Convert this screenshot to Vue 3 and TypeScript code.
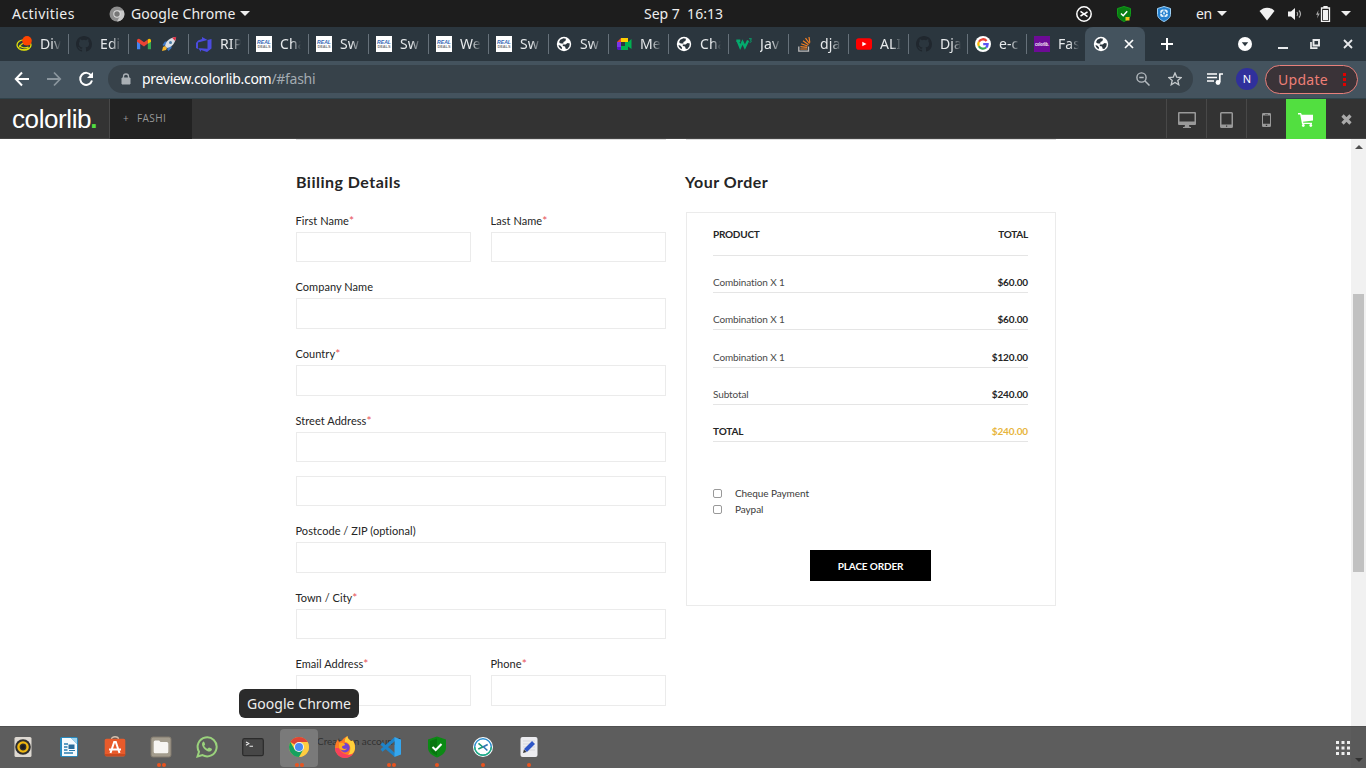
<script setup lang="ts">
interface Tab { icon: string; title: string; kind?: string }
interface Field { label: string; required?: boolean; lines?: number }
interface Line { name: string; price: string; kind?: string }
interface App { icon: string; dots: number; active?: boolean }

const tabs: Tab[] = [
  { icon: 'diver', title: 'Div' },
  { icon: 'github', title: 'Edi' },
  { icon: 'gmail', title: '🚀', kind: 'rocket' },
  { icon: 'azure', title: 'RIP' },
  { icon: 'deals', title: 'Cha' },
  { icon: 'deals', title: 'Sw' },
  { icon: 'deals', title: 'Sw' },
  { icon: 'deals', title: 'We' },
  { icon: 'deals', title: 'Sw' },
  { icon: 'globe', title: 'Sw' },
  { icon: 'meet', title: 'Me' },
  { icon: 'globe', title: 'Cha' },
  { icon: 'w3', title: 'Jav' },
  { icon: 'stack', title: 'dja' },
  { icon: 'youtube', title: 'ALI' },
  { icon: 'github', title: 'Dja' },
  { icon: 'google', title: 'e-c' },
  { icon: 'purple', title: 'Fas' },
]

const rows: Field[][] = [
  [{ label: 'First Name', required: true }, { label: 'Last Name', required: true }],
  [{ label: 'Company Name' }],
  [{ label: 'Country', required: true }],
  [{ label: 'Street Address', required: true, lines: 2 }],
  [{ label: 'Postcode / ZIP (optional)' }],
  [{ label: 'Town / City', required: true }],
  [{ label: 'Email Address', required: true }, { label: 'Phone', required: true }],
]

const lines: Line[] = [
  { name: 'Combination X 1', price: '$60.00' },
  { name: 'Combination X 1', price: '$60.00' },
  { name: 'Combination X 1', price: '$120.00' },
  { name: 'Subtotal', price: '$240.00' },
  { name: 'TOTAL', price: '$240.00', kind: 'sum' },
]

const payments: string[] = ['Cheque Payment', 'Paypal']

const apps: App[] = [
  { icon: 'rhythm', dots: 0 },
  { icon: 'writer', dots: 0 },
  { icon: 'store', dots: 0 },
  { icon: 'files', dots: 2 },
  { icon: 'whatsapp', dots: 0 },
  { icon: 'terminal', dots: 0 },
  { icon: 'chrome', dots: 2, active: true },
  { icon: 'firefox', dots: 0 },
  { icon: 'code', dots: 2 },
  { icon: 'shield', dots: 1 },
  { icon: 'desk', dots: 1 },
  { icon: 'editor', dots: 1 },
]
</script>

<template>
  <div class="screen">
    <svg class="defs" aria-hidden="true">
      <symbol id="diver" viewBox="0 0 16 16">
        <ellipse cx="8" cy="9" rx="7" ry="5.2" fill="none" stroke="#e0e00a" stroke-width="1.300" />
        <path d="M2.500 12c2-4 5-5 7-5M3.500 9c1 3 6 3.500 9 2M4 13c3 1 7 1 9-1" fill="none" stroke="#e0e00a" stroke-width="1.100" />
        <circle cx="11" cy="4.800" r="4.800" fill="#ff4500" />
      </symbol>
      <symbol id="github" viewBox="0 0 16 16">
        <path fill="#20272e" d="M8 0C3.580 0 0 3.580 0 8c0 3.540 2.290 6.530 5.470 7.590.4.070.55-.17.55-.38v-1.490c-2.010.37-2.530-.49-2.690-.94-.09-.23-.48-.94-.82-1.130-.28-.15-.68-.52-.01-.53.63-.01 1.080.58 1.230.82.72 1.210 1.870.87 2.330.66.07-.52.28-.87.51-1.070-1.780-.2-3.640-.89-3.640-3.950 0-.87.31-1.590.82-2.150-.08-.2-.36-1.020.08-2.120 0 0 .67-.21 2.200.82a7.600 7.600 0 0 1 4 0c1.530-1.040 2.200-.82 2.200-.82.44 1.100.16 1.920.08 2.120.51.56.82 1.270.82 2.150 0 3.070-1.870 3.750-3.650 3.950.29.25.54.73.54 1.480v2.200c0 .21.15.46.55.38A8 8 0 0 0 16 8c0-4.420-3.580-8-8-8z" />
      </symbol>
      <symbol id="gmail" viewBox="0 0 16 16">
        <path fill="#4285f4" d="M1 5v8.300h3.200V7z" /><path fill="#34a853" d="M15 5v8.300h-3.200V7z" />
        <path fill="#ea4335" d="M1 5C1 2.800 2.800 2.300 4.200 3.400L8 6.300l3.800-2.900v4.100L8 10.400 1 5.800z" />
        <path fill="#fbbc04" d="M11.800 3.400c1.400-1.100 3.200-.6 3.200 1.600v.8l-3.200 2z" />
      </symbol>
      <symbol id="azure" viewBox="0 0 16 16">
        <path fill="#4b4be0" d="M15.500 3v9.500L11 16l-6-2v2L2 12l9.500.8V4zM11.500 4 6 1v2L2 4.500 0 7v5l2 1V6.500z" />
      </symbol>
      <symbol id="globe" viewBox="0 0 16 16">
        <circle cx="8" cy="8" r="7.200" fill="#fff" />
        <path fill="#2b363e" d="M7.500 2.300 10 2.800l-.6 2.200-2 1v1.500H4.800L3 6.200l1.200-2.400zM6.800 8.500h2.700l2-1.500 2.300.5-.5 3-2 2.500-1.600-.2-.7-2.300-2.200-.5zM2.500 9l2 .8 1.500 1.700-.3 1.700C4 12.500 2.800 11 2.500 9z" />
      </symbol>
      <symbol id="meet" viewBox="0 0 16 16">
        <path fill="#ffcf00" d="M5 2h7v4H5z" /><path fill="#ea4335" d="M1 6l4-4v4z" />
        <path fill="#7b35e8" d="M1 6h4v5H1z" /><path fill="#5a13c8" d="M1 11h4v3H2l-1-1z" />
        <path fill="#2b363e" d="M5 6h5v4H5z" />
        <path fill="#00b050" d="M5 10h4V6h3l3.500-3v10L12 10.500V14H5z" />
      </symbol>
      <symbol id="w3" viewBox="0 0 16 16">
        <path d="M1.500 4.500 4.200 11 6.500 6l2.400 5 3.200-6.500M.3 4.800h4" fill="none" stroke="#04aa6d" stroke-width="2.400" />
        <path d="M13 2.700h2.500L14.400 4.300c1.400 0 1.400 2-.8 2" fill="none" stroke="#04aa6d" stroke-width=".9" />
      </symbol>
      <symbol id="stack" viewBox="0 0 16 16">
        <path d="M2.800 10.500v4.700h9.700v-4.700" fill="none" stroke="#bcbbbb" stroke-width="1.300" />
        <path d="M4.300 13h6.800M4.400 10.600l6.700.8M5.200 7.800l6.400 2.200M7 4.800l5.500 4M9.500 2.200l4 5.300M13 1l.8 5.500" stroke="#f48024" stroke-width="1.200" />
      </symbol>
      <symbol id="youtube" viewBox="0 0 16 16">
        <rect y="2.300" width="16" height="11.400" rx="2.800" fill="#f00" /><path d="m6.300 5.700 4.200 2.300-4.200 2.300z" fill="#fff" />
      </symbol>
      <symbol id="google" viewBox="0 0 16 16">
        <circle cx="8" cy="8" r="8" fill="#fff" />
        <g fill="none" stroke-width="2.300"><path d="M11.600 4.900A4.700 4.700 0 0 0 3.900 5.700" stroke="#ea4335" /><path d="M3.900 5.700a4.700 4.700 0 0 0 0 4.600" stroke="#fbbc05" /><path d="M3.900 10.300a4.700 4.700 0 0 0 7.200 1.200" stroke="#34a853" /><path d="M8.200 8.200h4.400c0 1.500-.6 2.500-1.500 3.300" stroke="#5a55f5" /></g>
      </symbol>

      <symbol id="rhythm" viewBox="0 0 22 22">
        <rect x="2.500" y="1" width="17" height="20" rx="1.500" fill="#ded9d2" /><circle cx="11" cy="11" r="7.800" fill="#2e2e2e" />
        <circle cx="11" cy="11" r="4.600" fill="none" stroke="#efb710" stroke-width="2.400" /><circle cx="11" cy="11" r="2" fill="#1d1d1d" />
      </symbol>
      <symbol id="writer" viewBox="0 0 22 22">
        <rect x="2" y="1" width="18" height="20" rx="2" fill="#2889bd" />
        <path d="M4 2h9l6 6v12H4z" fill="#f4fafd" /><path d="M13 2h6v6z" fill="#9fd3ee" />
        <path d="M6 8h4M6 11h3.500M6 14h3.500M6 17h9" stroke="#2a7db0" stroke-width="1.300" /><rect x="10.500" y="8.500" width="6" height="4.500" fill="#2a6d9c" /><path d="M11 14.500h6" stroke="#2a7db0" />
      </symbol>
      <symbol id="store" viewBox="0 0 22 22">
        <path d="M7.500 4V3c0-3 7-3 7 0v1" fill="none" stroke="#d6c0ad" stroke-width="1.300" />
        <rect x=".7" y="2.800" width="20.600" height="17.700" rx="1.800" fill="#e95b2b" /><path d="M.7 19h20.600" stroke="#a93a16" />
        <path d="M6.500 17 10.200 6h1.600l3.700 11M5 13.500h12" fill="none" stroke="#fff" stroke-width="2" />
      </symbol>
      <symbol id="files" viewBox="0 0 22 22">
        <rect x="1" y="1" width="20" height="20" rx="2" fill="#a39c8d" stroke="#827b6e" /><path d="M3.700 6q0-1.500 1.500-1.500h4L10.500 6h6.300q1.500 0 1.500 1.500v8.300q0 1.500-1.500 1.500H5.200q-1.500 0-1.500-1.500z" fill="#f7f5f2" />
      </symbol>
      <symbol id="whatsapp" viewBox="0 0 22 22">
        <path d="M1.500 20.500 3 15.700a9.500 9.500 0 1 1 3.500 3.400z" fill="none" stroke="#9ad27c" stroke-width="2" />
        <path d="M7.300 5.500c-2.800 2.500-.5 6 2 8.300 2.500 2.200 5 2.500 6.500.2.500-.8.300-1.200-2.700-2.400-.8 0-1 1.400-1.600 1.200-1.800-.6-3.200-2.300-3.300-3 .1-.6 1-1 .9-1.600-.5-1.300-.8-2.700-1.800-2.700z" fill="#9ad27c" />
      </symbol>
      <symbol id="terminal" viewBox="0 0 22 22">
        <rect x=".7" y="2.700" width="20.600" height="17" rx="1.800" fill="#474747" stroke="#2b2b2b" stroke-width="1.200" />
        <path d="m4 6 2.800 1.600L4 9.200M7.500 10.300h3.500" fill="none" stroke="#eee" stroke-width="1.100" />
      </symbol>
      <symbol id="chrome" viewBox="0 0 22 22">
        <circle cx="11" cy="11" r="10" fill="#ffcd40" /><path d="M11 11 2.340 6A10 10 0 0 1 19.660 6z" fill="#dd4436" />
        <path d="M11 6h8.660A10 10 0 0 1 11 21l4.300-7.500z" fill="#ffcd40" /><path d="M2.340 6A10 10 0 0 0 11 21l4.300-7.500H6.700z" fill="#16a15f" />
        <circle cx="11" cy="11" r="5" fill="#f3f3f3" /><circle cx="11" cy="11" r="4" fill="#4a8af4" />
      </symbol>
      <symbol id="firefox" viewBox="0 0 22 22">
        <path d="M1 12C1 8 2 6 4 3.500L5 6l3-1.500C9 2 12 1 13.500 0c0 3 2 3.500 3.500 5l1.500-.5C20.500 6.500 21.300 9 21 12a10 10 0 0 1-20 0z" fill="#ff7b24" />
        <path d="M13.500 0C11 2 10.500 4 11 6c3 0 5.500 3 5.300 6.500 0 3-1 5-2.300 6.500 5-.3 7-4 7-7 0-3.500-1-6-2.500-7.500L17 5c-1.500-1.500-3.500-2-3.500-5z" fill="#ffd03a" />
        <path d="M1 12c0 5 4.500 10 10 10 3 0 6-1.500 8-4-5 2-12 0-14-6z" fill="#f8405c" /><circle cx="11" cy="11.800" r="4.700" fill="#7242d2" /><path d="M5 7c3-.5 6 0 6 1.500 0 1.200-3 1-3 2.500s2 2.500 5 1.500c-2 3-7 2-8-1z" fill="#ffa91e" />
      </symbol>
      <symbol id="code" viewBox="0 0 22 22">
        <path d="m1.500 14.500 14-12M1.500 7.500l14 12" stroke="#1e83c8" stroke-width="3" /><path d="m14.500 1 6.500 2.500v15L14.500 21z" fill="#35a6ed" />
      </symbol>
      <symbol id="shield" viewBox="0 0 22 22">
        <path d="m11 .5 9 3v8c0 5-4 8-9 10-5-2-9-5-9-10v-8z" fill="#0b8a14" /><path d="M11 2.500 4 5v6.500c0 4 3 6.300 7 8z" fill="#08760f" /><path d="m6.500 11 3.200 3 5.800-6" fill="none" stroke="#fff" stroke-width="2" />
      </symbol>
      <symbol id="desk" viewBox="0 0 22 22">
        <circle cx="11" cy="11" r="10" fill="#fff" /><circle cx="11" cy="11" r="8.300" fill="none" stroke="#2f8fd0" stroke-width="1.400" /><path d="M2.700 11a8.300 8.300 0 0 0 16.600 0" fill="none" stroke="#21b07b" stroke-width="1.400" />
        <path d="m6.500 7.300 4.300 3.700-4.500 2" fill="none" stroke="#1b9c78" stroke-width="1.600" /><path d="m15.700 8.500-4.300 2.300 4 3.700" fill="none" stroke="#3176b5" stroke-width="1.600" />
      </symbol>
      <symbol id="editor" viewBox="0 0 22 22">
        <rect x="2.500" y="1" width="17" height="20" rx="2" fill="#ececf0" /><path d="M5 5h12M5 8h12M5 11h12M5 14h12" stroke="#d5d5dc" />
        <path d="m7.500 14.500 8-8" stroke="#2d55c7" stroke-width="4" /><path d="m5 17 1-3.500L8.500 16z" fill="#333" />
      </symbol>
    </svg>

    <header class="panel">
      <span class="activities">Activities</span>
      <span class="app-menu">
        <svg class="i16" viewBox="0 0 16 16"><circle cx="8" cy="8" r="7.500" fill="#8d8d8d" /><path d="M8 4.500h6.500A7.500 7.500 0 0 1 8 15.500l3-5.500z" fill="#c9c9c9" /><circle cx="8" cy="8" r="3.700" fill="#ddd" /><circle cx="8" cy="8" r="2.700" fill="#777" /></svg>
        <span class="app-name">Google Chrome</span><i class="caret" />
      </span>
      <span class="clock">Sep 7&nbsp; 16:13</span>
      <div class="tray">
        <svg class="t-desk" viewBox="0 0 16 16"><circle cx="8" cy="8" r="7.200" fill="none" stroke="#fff" stroke-width="1.500" /><path d="m4.500 5.300 3.500 2.700-3.500 2M11.500 6 8 8l3.500 2.700" fill="none" stroke="#fff" stroke-width="1.500" /></svg>
        <svg class="t-shield" viewBox="0 0 14 16"><path d="m7 .5 6.500 2v6c0 3-3 5.500-6.500 7C3.500 14 .5 11.500.5 8.500v-6z" fill="#0a7d12" stroke="#119b1a" /><path d="m4 7.500 2.200 2.200 4-4.500" fill="none" stroke="#fff" stroke-width="1.500" /><path d="M8.500 11h4v3.500h-4z" fill="#f0c419" /></svg>
        <svg class="t-vpn" viewBox="0 0 14 16"><path d="m7 .5 6.500 2v6c0 3-3 5.500-6.500 7C3.500 14 .5 11.500.5 8.500v-6z" fill="#2581cf" stroke="#9fd0f5" /><rect x="3.200" y="3.500" width="7.600" height="7.600" rx="2.500" fill="#e3f2fc" /><path d="M5.500 5.800h3v3h-3z" fill="#bfe0f8" stroke="#2581cf" /><path d="M7 3.500v2M7 9v2M3.200 7.300h2M9 7.300h2" stroke="#2581cf" /></svg>
        <span class="lang">en</span><i class="caret" />
        <svg class="t-wifi" viewBox="0 0 16 14"><path d="M8 13.500.5 4C5-.5 11-.5 15.500 4z" fill="#f2f2f2" /></svg>
        <svg class="t-vol" viewBox="0 0 16 14"><path d="M1 4.500h3L8 1v12L4 9.500H1z" fill="#f2f2f2" /><path d="M10 5q1.500 2 0 4M12 3.500q3 3.500 0 7" fill="none" stroke="#aaa" stroke-width="1.200" /></svg>
        <svg class="t-bat" viewBox="0 0 16 16"><path d="M3.500 4 1 8.800h1.800L2 12.500l2.800-5H3z" fill="#aaa" /><path d="M9 0h3v1.500H9zM6.500 2h8v13.300h-8z" fill="none" stroke="#f2f2f2" stroke-width="1.300" /><path d="M8 4h5v10H8z" fill="#f2f2f2" /></svg>
        <i class="caret last" />
      </div>
    </header>

    <nav class="tabs">
      <div v-for="(t, n) in tabs" :key="n" class="tab" :class="{ narrow: n > 14 }">
        <svg v-if="t.icon === 'deals'" class="fav" viewBox="0 0 16 16">
          <rect width="16" height="16" fill="#fff" />
          <text x="1" y="7.600" font-size="4.900" font-weight="700" font-style="italic" textLength="14" lengthAdjust="spacingAndGlyphs" fill="#3568b5">REAL</text>
          <text x="1.500" y="12.300" font-size="4.200" font-weight="700" textLength="13" lengthAdjust="spacingAndGlyphs" fill="#77767e">DEALS</text>
        </svg>
        <svg v-else-if="t.icon === 'purple'" class="fav" viewBox="0 0 16 16">
          <rect width="16" height="16" fill="#6d0b96" />
          <text x="1" y="9.700" font-size="4.500" font-weight="700" textLength="14" lengthAdjust="spacingAndGlyphs" fill="#fff">colorlib.</text>
        </svg>
        <svg v-else class="fav"><use :href="'#' + t.icon" /></svg>
        <svg v-if="t.kind" class="rocket" viewBox="0 0 16 16"><path d="m1 15 1-4 2-1 2 2-1 2z" fill="#f5b328" /><path d="M4 5.500h4L3 10 1.500 9zM10.500 8v4l-3 3L6 13z" fill="#3d79c9" /><path d="M4 10C5 5 9 1.500 15 1c-.5 6-4 10-9 11z" fill="#d9dee4" /><path d="M11 1.800 15.300.7 14.200 5z" fill="#dd2e44" /><circle cx="9.500" cy="6.500" r="1.500" fill="#4a7ca8" /></svg>
        <span v-else class="title">{{ t.title }}</span>
      </div>
      <div class="tab-active">
        <svg class="fav"><use href="#globe" /></svg>
        <svg class="x" viewBox="0 0 10 10"><path d="m1 1 8 8M9 1 1 9" stroke="#fff" stroke-width="1.700" /></svg>
      </div>
      <svg class="plus" viewBox="0 0 12 12"><path d="M6 0v12M0 6h12" stroke="#fff" stroke-width="2" /></svg>
      <div class="win">
        <svg class="w-drop" viewBox="0 0 14 14"><circle cx="7" cy="7" r="7" fill="#fff" /><path d="M3.800 5.300h6.400L7 9.200z" fill="#2b363e" /></svg>
        <svg class="w-min" viewBox="0 0 10 2"><path d="M0 0h10v2H0z" fill="#e8eaec" /></svg>
        <svg class="w-max" viewBox="0 0 10 10"><path d="M3.500 1H9v5.500H3.500z" fill="none" stroke="#e8eaec" stroke-width="1.900" /><path d="M1 3v6.200h6.500" fill="none" stroke="#e8eaec" stroke-width="1.700" /></svg>
        <svg class="w-close" viewBox="0 0 10 10"><path d="m1 1 8 8M9 1 1 9" stroke="#e8eaec" stroke-width="1.800" /></svg>
      </div>
    </nav>

    <div class="toolbar">
      <svg class="nav" viewBox="0 0 16 16"><path d="M15 8H2M8 1.500 1.800 8 8 14.500" fill="none" stroke="#fff" stroke-width="2" /></svg>
      <svg class="nav" viewBox="0 0 16 16"><path d="M1 8h13M8 1.500 14.200 8 8 14.500" fill="none" stroke="#8b969e" stroke-width="1.800" /></svg>
      <svg class="nav" viewBox="0 0 16 16"><path d="M13.200 4.500A6 6 0 1 0 14 9.500" fill="none" stroke="#fff" stroke-width="2" /><path d="M15 1v6H9z" fill="#fff" /></svg>
      <div class="omnibox">
        <svg class="lock" viewBox="0 0 10 12"><path d="M1 5h8v6H1z" fill="#aab0b5" stroke="#aab0b5" stroke-linejoin="round" /><path d="M2.500 5V3.500a2.500 2.500 0 0 1 5 0V5" fill="none" stroke="#aab0b5" stroke-width="1.300" /></svg>
        <span class="url">preview.colorlib.com<em>/#fashi</em></span>
        <svg class="mag" viewBox="0 0 14 14"><circle cx="5.500" cy="5.500" r="4.600" fill="none" stroke="#b5bbc0" stroke-width="1.400" /><path d="m9 9 4.500 4.500M3.300 5.500h4.400" stroke="#b5bbc0" stroke-width="1.500" /></svg>
        <svg class="star" viewBox="0 0 14 14"><path d="m7 1 1.700 4.100 4.500.4-3.400 2.900 1 4.400L7 10.500l-3.800 2.300 1-4.400L.8 5.500l4.500-.4z" fill="none" stroke="#c5cacd" stroke-width="1.300" /></svg>
      </div>
      <svg class="queue" viewBox="0 0 16 14"><path d="M0 2h10M0 5.500h10M0 9h7M12.800 1.500V10M12.500 2h3.500" stroke="#fff" stroke-width="1.700" /><circle cx="11" cy="10.500" r="2.400" fill="#fff" /></svg>
      <span class="avatar">N</span>
      <span class="update"><span>Update</span><svg viewBox="0 0 3 13"><path d="M0 0h3v3H0zM0 5h3v3H0zM0 10h3v3H0z" fill="#e00000" /></svg></span>
    </div>

    <div class="preview-bar">
      <div class="logo"><span>colorlib</span><b>.</b></div>
      <div class="theme"><span class="sign">+</span>FASHI</div>
      <div class="devices">
        <div class="dev"><svg class="d1" viewBox="0 0 18 16"><path fill-rule="evenodd" fill="#999" d="M1 0h16q1 0 1 1v11q0 1-1 1h-6l.5 2H13v1H5v-1h1.500L7 13H1q-1 0-1-1V1q0-1 1-1zm.5 1.500v8h15v-8z" /></svg></div>
        <div class="dev"><svg class="d2" viewBox="0 0 13 16"><path fill-rule="evenodd" fill="#999" d="M1.500 0h10Q13 0 13 1.500v13q0 1.500-1.500 1.500h-10Q0 16 0 14.500v-13Q0 0 1.500 0zm0 1.500v11h10v-11zM6 13.500v1.300h1.200v-1.300z" /></svg></div>
        <div class="dev"><svg class="d3" viewBox="0 0 9 14"><path fill-rule="evenodd" fill="#999" d="M1.300 0h6.400Q9 0 9 1.300v11.400Q9 14 7.700 14H1.300Q0 14 0 12.700V1.300Q0 0 1.300 0zM1 2.500v8.300h7V2.500zM3.800 11.800V13h1.400v-1.200zM3 1v.6h3V1z" /></svg></div>
        <div class="dev buy"><svg class="d4" viewBox="0 0 16 14"><path d="M0 0h3l.8 1.700H15V7.500L5 8.700l.3 1H14V11H4L2.200 1.400H0z" fill="#fff" /><circle cx="5.300" cy="12.500" r="1.400" fill="#fff" /><circle cx="12.800" cy="12.500" r="1.400" fill="#fff" /></svg></div>
        <div class="dev end"><svg class="d5" viewBox="0 0 11 11"><path d="m1.500 1.500 8 8M9.500 1.500l-8 8" stroke="#aaa" stroke-width="3.200" /></svg></div>
      </div>
    </div>

    <main class="page">
      <section class="billing">
        <h4>Biiling Details</h4>
        <div v-for="(r, n) in rows" :key="n" class="row">
          <div v-for="f in r" :key="f.label" class="field">
            <label>{{ f.label }}<span v-if="f.required" class="req">*</span></label>
            <input v-for="k in f.lines ?? 1" :key="k" type="text">
          </div>
        </div>
        <div class="create"><span>Create an account?</span></div>
      </section>
      <section class="order">
        <h4>Your Order</h4>
        <div class="card">
          <div class="head"><span>PRODUCT</span><span>TOTAL</span></div>
          <div v-for="(l, n) in lines" :key="n" class="line" :class="l.kind"><span>{{ l.name }}</span><b>{{ l.price }}</b></div>
          <div class="pay">
            <div v-for="p in payments" :key="p" class="opt"><i class="box" /><span>{{ p }}</span></div>
          </div>
          <button type="button">PLACE ORDER</button>
        </div>
      </section>
      <div class="scroll"><i class="up" /><div class="thumb" /><i class="down" /></div>
    </main>

    <div class="tooltip">Google Chrome</div>
    <footer class="dock">
      <div v-for="a in apps" :key="a.icon" class="app" :class="{ on: a.active }">
        <svg><use :href="'#' + a.icon" /></svg>
        <span class="dots"><i v-for="d in a.dots" :key="d" /></span>
      </div>
      <svg class="grid" viewBox="0 0 14 14"><path d="M0 0h3v3H0zM5.500 0h3v3h-3zM11 0h3v3h-3zM0 5.500h3v3H0zM5.500 5.500h3v3h-3zM11 5.500h3v3h-3zM0 11h3v3H0zM5.500 11h3v3h-3zM11 11h3v3h-3z" fill="#eee" /></svg>
    </footer>
  </div>
</template>

<style>
body { margin: 0; overflow: hidden; }
</style>

<style scoped>
.screen { position: relative; width: 1366px; height: 768px; overflow: hidden; background: #fff; font-family: "Noto Sans", "Open Sans", sans-serif; display: flex; flex-direction: column; }
.screen * { box-sizing: border-box; }
.defs { position: absolute; width: 0; height: 0; }
svg { display: block; flex: none; }
i { flex: none; }
.panel { height: 27px; flex: none; background: #1d1d1d; color: #eee; display: flex; align-items: center; padding-left: 12px; font-size: 14px; white-space: nowrap; }
.activities { width: 97px; letter-spacing: .45px; }
.app-menu { display: flex; align-items: center; width: 535px; }
.i16 { width: 16px; height: 16px; margin-right: 6px; }
.app-name { letter-spacing: .08px; }
.caret { border: 5px solid transparent; border-top-color: #eee; border-bottom: 0; margin-left: 5px; }
.clock { width: 432px; letter-spacing: 0; }
.tray { display: flex; align-items: center; }
.t-desk { width: 16px; height: 16px; }
.t-shield { width: 14px; height: 16px; margin-left: 25px; }
.t-vpn { width: 14px; height: 16px; margin-left: 26px; }
.lang { margin-left: 25px; letter-spacing: -.3px; }
.tray .caret { margin-left: 5px; }
.t-wifi { width: 16px; height: 14px; margin-left: 32px; }
.t-vol { width: 16px; height: 14px; margin-left: 12px; }
.t-bat { width: 16px; height: 16px; margin-left: 12px; }
.tray .last { margin-left: 10px; }

.tabs { height: 34px; flex: none; background: #2b363e; display: flex; align-items: center; padding-left: 9px; }
.tab { width: 60px; height: 20px; border-right: 1px solid #66717a; display: flex; align-items: center; padding-left: 7px; flex: none; }
.tab.narrow { width: 59px; }
.tab:nth-child(18) { border-right: 0; width: 58px; }
.fav { width: 16px; height: 16px; margin-right: 8px; font-family: "Liberation Sans", Arial, sans-serif; }
.rocket { width: 16px; height: 16px; margin-left: 1px; }
.title { width: 21px; overflow: hidden; white-space: nowrap; color: #e6e9eb; font-size: 14px; line-height: 20px; letter-spacing: .1px; mask-image: linear-gradient(90deg, #000 55%, transparent); }
.tab-active { width: 60px; height: 34px; background: #44535e; border-radius: 8px 8px 0 0; display: flex; align-items: center; padding-left: 8px; flex: none; }
.x { width: 10px; height: 10px; margin-left: 7px; }
.plus { width: 12px; height: 12px; margin-left: 16px; }
.win { margin-left: auto; display: flex; align-items: center; padding-right: 13px; }
.w-drop { width: 14px; height: 14px; }
.w-min { width: 10px; height: 2px; margin: 8px 22px 0 26px; }
.w-max { width: 10px; height: 10px; margin-right: 23px; }
.w-close { width: 10px; height: 10px; }

.toolbar { height: 38px; flex: none; background: #44535e; border-bottom: 1px solid #30424a; display: flex; align-items: center; padding: 0 8px 1px 14px; }
.nav { width: 16px; height: 16px; margin-right: 16px; }
.nav + .nav + .nav { margin-right: 14px; }
.omnibox { width: 1085px; height: 28px; border-radius: 14px; background: #37424a; display: flex; align-items: center; padding: 0 11px 0 13px; }
.lock { width: 10px; height: 12px; margin-right: 11px; }
.url { font-size: 14px; line-height: 20px; color: #fff; letter-spacing: -.29px; white-space: nowrap; }
.url em { font-style: normal; color: #a3abb1; }
.mag { width: 14px; height: 14px; margin-left: auto; }
.star { width: 14px; height: 14px; margin-left: 18px; }
.queue { width: 16px; height: 14px; margin-left: 14px; }
.avatar { width: 22px; height: 22px; border-radius: 50%; background: #30309c; color: #fff; font-size: 11px; line-height: 22px; text-align: center; margin-left: 13px; }
.update { width: 93px; height: 29px; margin-left: auto; border: 1px solid #e8807b; border-radius: 15px; background: #3a3338; color: #ee7f77; font-size: 14px; letter-spacing: .3px; display: flex; align-items: center; justify-content: space-between; padding: 0 11px 0 12px; }
.update svg { width: 3px; height: 13px; }

.preview-bar { height: 40px; flex: none; background: #333; border-bottom: 1px solid #444; display: flex; }
.logo { width: 110px; border-right: 1px solid #484848; padding-left: 12px; display: flex; color: #fff; font: 26px/41px "Liberation Sans", Arial, sans-serif; letter-spacing: -.4px; }
.logo b { color: #52df40; margin-left: -1px; }
.theme { width: 82px; height: 40px; background: #222; color: #999; font: 10px/39px "Open Sans", sans-serif; padding-left: 13px; letter-spacing: .4px; }
.sign { display: inline-block; width: 14px; color: #999; }
.devices { margin-left: auto; display: flex; height: 40px; }
.dev { width: 40px; height: 39px; border-left: 1px solid #484848; display: flex; align-items: center; justify-content: center; padding-top: 2px; }
.dev.buy { background: #52df40; border: 0; height: 40px; }
.dev.end { border: 0; }
.d1 { width: 18px; height: 16px; } .d2 { width: 13px; height: 16px; } .d3 { width: 9px; height: 14px; } .d4 { width: 16px; height: 14px; } .d5 { width: 11px; height: 11px; }
.d3 { margin-right: 1px; }

.page { flex: 1; min-height: 0; display: flex; padding-left: 296px; font-family: Lato, "Open Sans", sans-serif; color: #252525; }
h4 { margin: 0 0 0 -1px; font-size: 16px; line-height: 20px; font-weight: 700; padding-top: 32px; height: 72px; letter-spacing: .48px; white-space: nowrap; }
.billing { width: 370px; flex: none; border-top: 1px solid #ddd; }
.billing h4 { margin-left: 0; height: 71.800px; }
.row { display: flex; gap: 20px; margin-bottom: 16px; }
.field { flex: 1; display: flex; flex-direction: column; }
label { font-size: 11px; line-height: 17px; margin: 0 0 3px -.5px; letter-spacing: .05px; white-space: nowrap; }
.req { color: #e7535a; font-size: 12px; line-height: 1; }
input { display: block; width: 100%; height: 30.600px; border: 1px solid #ebebeb; background: #fff; padding: 0; }
input + input { margin-top: 13.500px; }
.create { display: flex; align-items: center; font-size: 10px; height: 38px; padding-left: 21px; }
.box { width: 9px; height: 9px; border: 1px solid #999; border-radius: 2px; background: #fff; }
.order { width: 370px; flex: none; margin-left: 20px; border-top: 1px solid #ddd; }
.card { border: 1px solid #ebebeb; height: 394px; padding: 0 27px 0 26px; display: flex; flex-direction: column; font-size: 10px; }
.head { height: 43px; flex: none; display: flex; justify-content: space-between; line-height: 42px; border-bottom: 1px solid #e5e5e5; font-weight: 700; letter-spacing: -.25px; }
.line { height: 37.200px; flex: none; display: flex; justify-content: space-between; align-items: flex-end; border-bottom: 1px solid #e5e5e5; line-height: 18px; padding-bottom: 1px; color: #4a4a4a; letter-spacing: -.13px; }
.line b { color: #252525; }
.sum span { font-weight: 700; color: #252525; }
.line.sum b { color: #e7b53c; }
.pay { margin-top: 43.500px; color: #3a3a3a; }
.opt { height: 16px; display: flex; align-items: center; letter-spacing: -.08px; }
.opt span { margin-left: 13px; }
button { align-self: center; width: 121px; height: 31px; margin-top: 33px; background: #000; color: #fff; border: 0; padding: 1px 0 0; font: 700 10px Lato, sans-serif; letter-spacing: -.15px; }

.scroll { margin-left: auto; width: 15px; background: #f1f1f1; display: flex; flex-direction: column; align-items: center; padding-top: 6px; }
.up { border: 4px solid transparent; border-top: 0; border-bottom-color: #505050; }
.thumb { width: 11px; height: 278px; margin-top: 145px; background: #c1c1c1; }
.down { border: 4px solid transparent; border-bottom: 0; border-top-color: #202020; margin-top: auto; margin-bottom: 6px; }

.tooltip { position: absolute; left: 239px; top: 689px; width: 120px; height: 29px; border-radius: 6px; background: #2b2b2b; color: #eee; font-size: 14px; line-height: 29px; text-align: center; white-space: nowrap; letter-spacing: .05px; }
.dock { position: absolute; left: 0; right: 0; bottom: 0; height: 42px; background: rgba(52, 52, 52, .8); border-top: 1px solid #505050; display: flex; align-items: center; gap: 8px; padding-left: 4px; }
.app { width: 38px; height: 38px; border-radius: 4px; display: flex; flex-direction: column; align-items: center; padding-top: 7px; }
.app svg { width: 22px; height: 22px; }
.app.on { background: #7a7a7a; }
.dots { display: flex; gap: 1px; margin-top: 5px; }
.dots i { width: 4px; height: 4px; border-radius: 50%; background: #e95420; }
.grid { width: 14px; height: 14px; margin-left: auto; margin-right: 16px; }
</style>
